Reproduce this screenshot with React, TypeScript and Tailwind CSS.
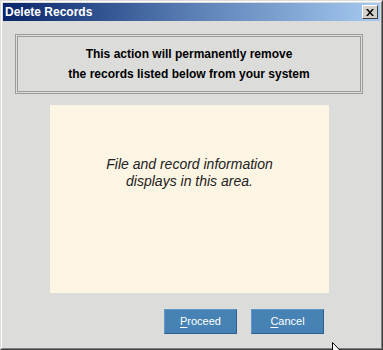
import type { ReactNode } from 'react'

function Button({ hot, rest }: { hot: string; rest: string }) {
  return (
    <button
      className="w-[73px] h-[25px] bg-[#4682b4] border border-t-[#5b97c8] border-l-[#5b97c8] border-r-[#2e5f8c] border-b-[#2e5f8c] text-white text-[11px] leading-none"
      style={{ fontFamily: '"Liberation Sans", Arial, sans-serif' }}
    >
      <span className="underline underline-offset-2">{hot}</span>
      {rest}
    </button>
  )
}

function Frame({ children }: { children: ReactNode }) {
  return (
    <div className="w-[383px] h-[350px] border border-t-[#dcdcd8] border-l-[#dcdcd8] border-r-[#404040] border-b-[#404040]">
      <div className="h-full border border-t-white border-l-white border-r-[#808080] border-b-[#808080] p-px bg-[#dcdddb] flex flex-col">
        {children}
      </div>
    </div>
  )
}

export default function App() {
  return (
    <div className="relative w-[383px] h-[350px] overflow-hidden" style={{ fontFamily: '"Liberation Sans", Arial, sans-serif' }}>
      <Frame>
        {/* Title bar */}
        <div className="h-[18px] flex items-center justify-between pl-[2px] pr-[2px] bg-gradient-to-r from-[#0a246a] via-[#5a7fb4] to-[#a6caf0]">
          <span className="text-white font-bold text-[12px] leading-none">Delete Records</span>
          <div className="w-[16px] h-[14px] bg-[#d4d0c8] border border-t-white border-l-white border-r-[#404040] border-b-[#404040] flex items-center justify-center">
            <svg width="8" height="7" viewBox="0 0 8 7">
              <path d="M0 0h2l2 2.5L6 0h2L5 3.5 8 7H6L4 4.5 2 7H0l3-3.5z" fill="#000" />
            </svg>
          </div>
        </div>

        {/* Body */}
        <div className="flex-1 flex flex-col">
          <div className="ml-[12px] mt-[13px] w-[348px] h-[60px] border-[3px] border-double border-[#9c9c9c] flex flex-col items-center justify-center text-[12px] font-bold text-black leading-[20px]">
            <span>This action will permanently remove</span>
            <span>the records listed below from your system</span>
          </div>

          <div className="ml-[47px] mt-[11px] w-[279px] h-[188px] bg-[#fcf5e3] flex flex-col items-center pt-[51px] text-[14px] italic text-[#222] leading-[17px]">
            <span>File and record information</span>
            <span>displays in this area.</span>
          </div>

          <div className="ml-[161px] mt-[16px] flex gap-[14px]">
            <Button hot="P" rest="roceed" />
            <Button hot="C" rest="ancel" />
          </div>
        </div>
      </Frame>

      {/* mouse cursor */}
      <svg className="absolute left-[332px] top-[342px]" width="12" height="19" viewBox="0 0 12 19">
        <path d="M0.5 0.5v15l3.5-3.5 2.5 6 2-1-2.5-5.5h5z" fill="#fff" stroke="#000" strokeWidth="1" />
      </svg>
    </div>
  )
}
